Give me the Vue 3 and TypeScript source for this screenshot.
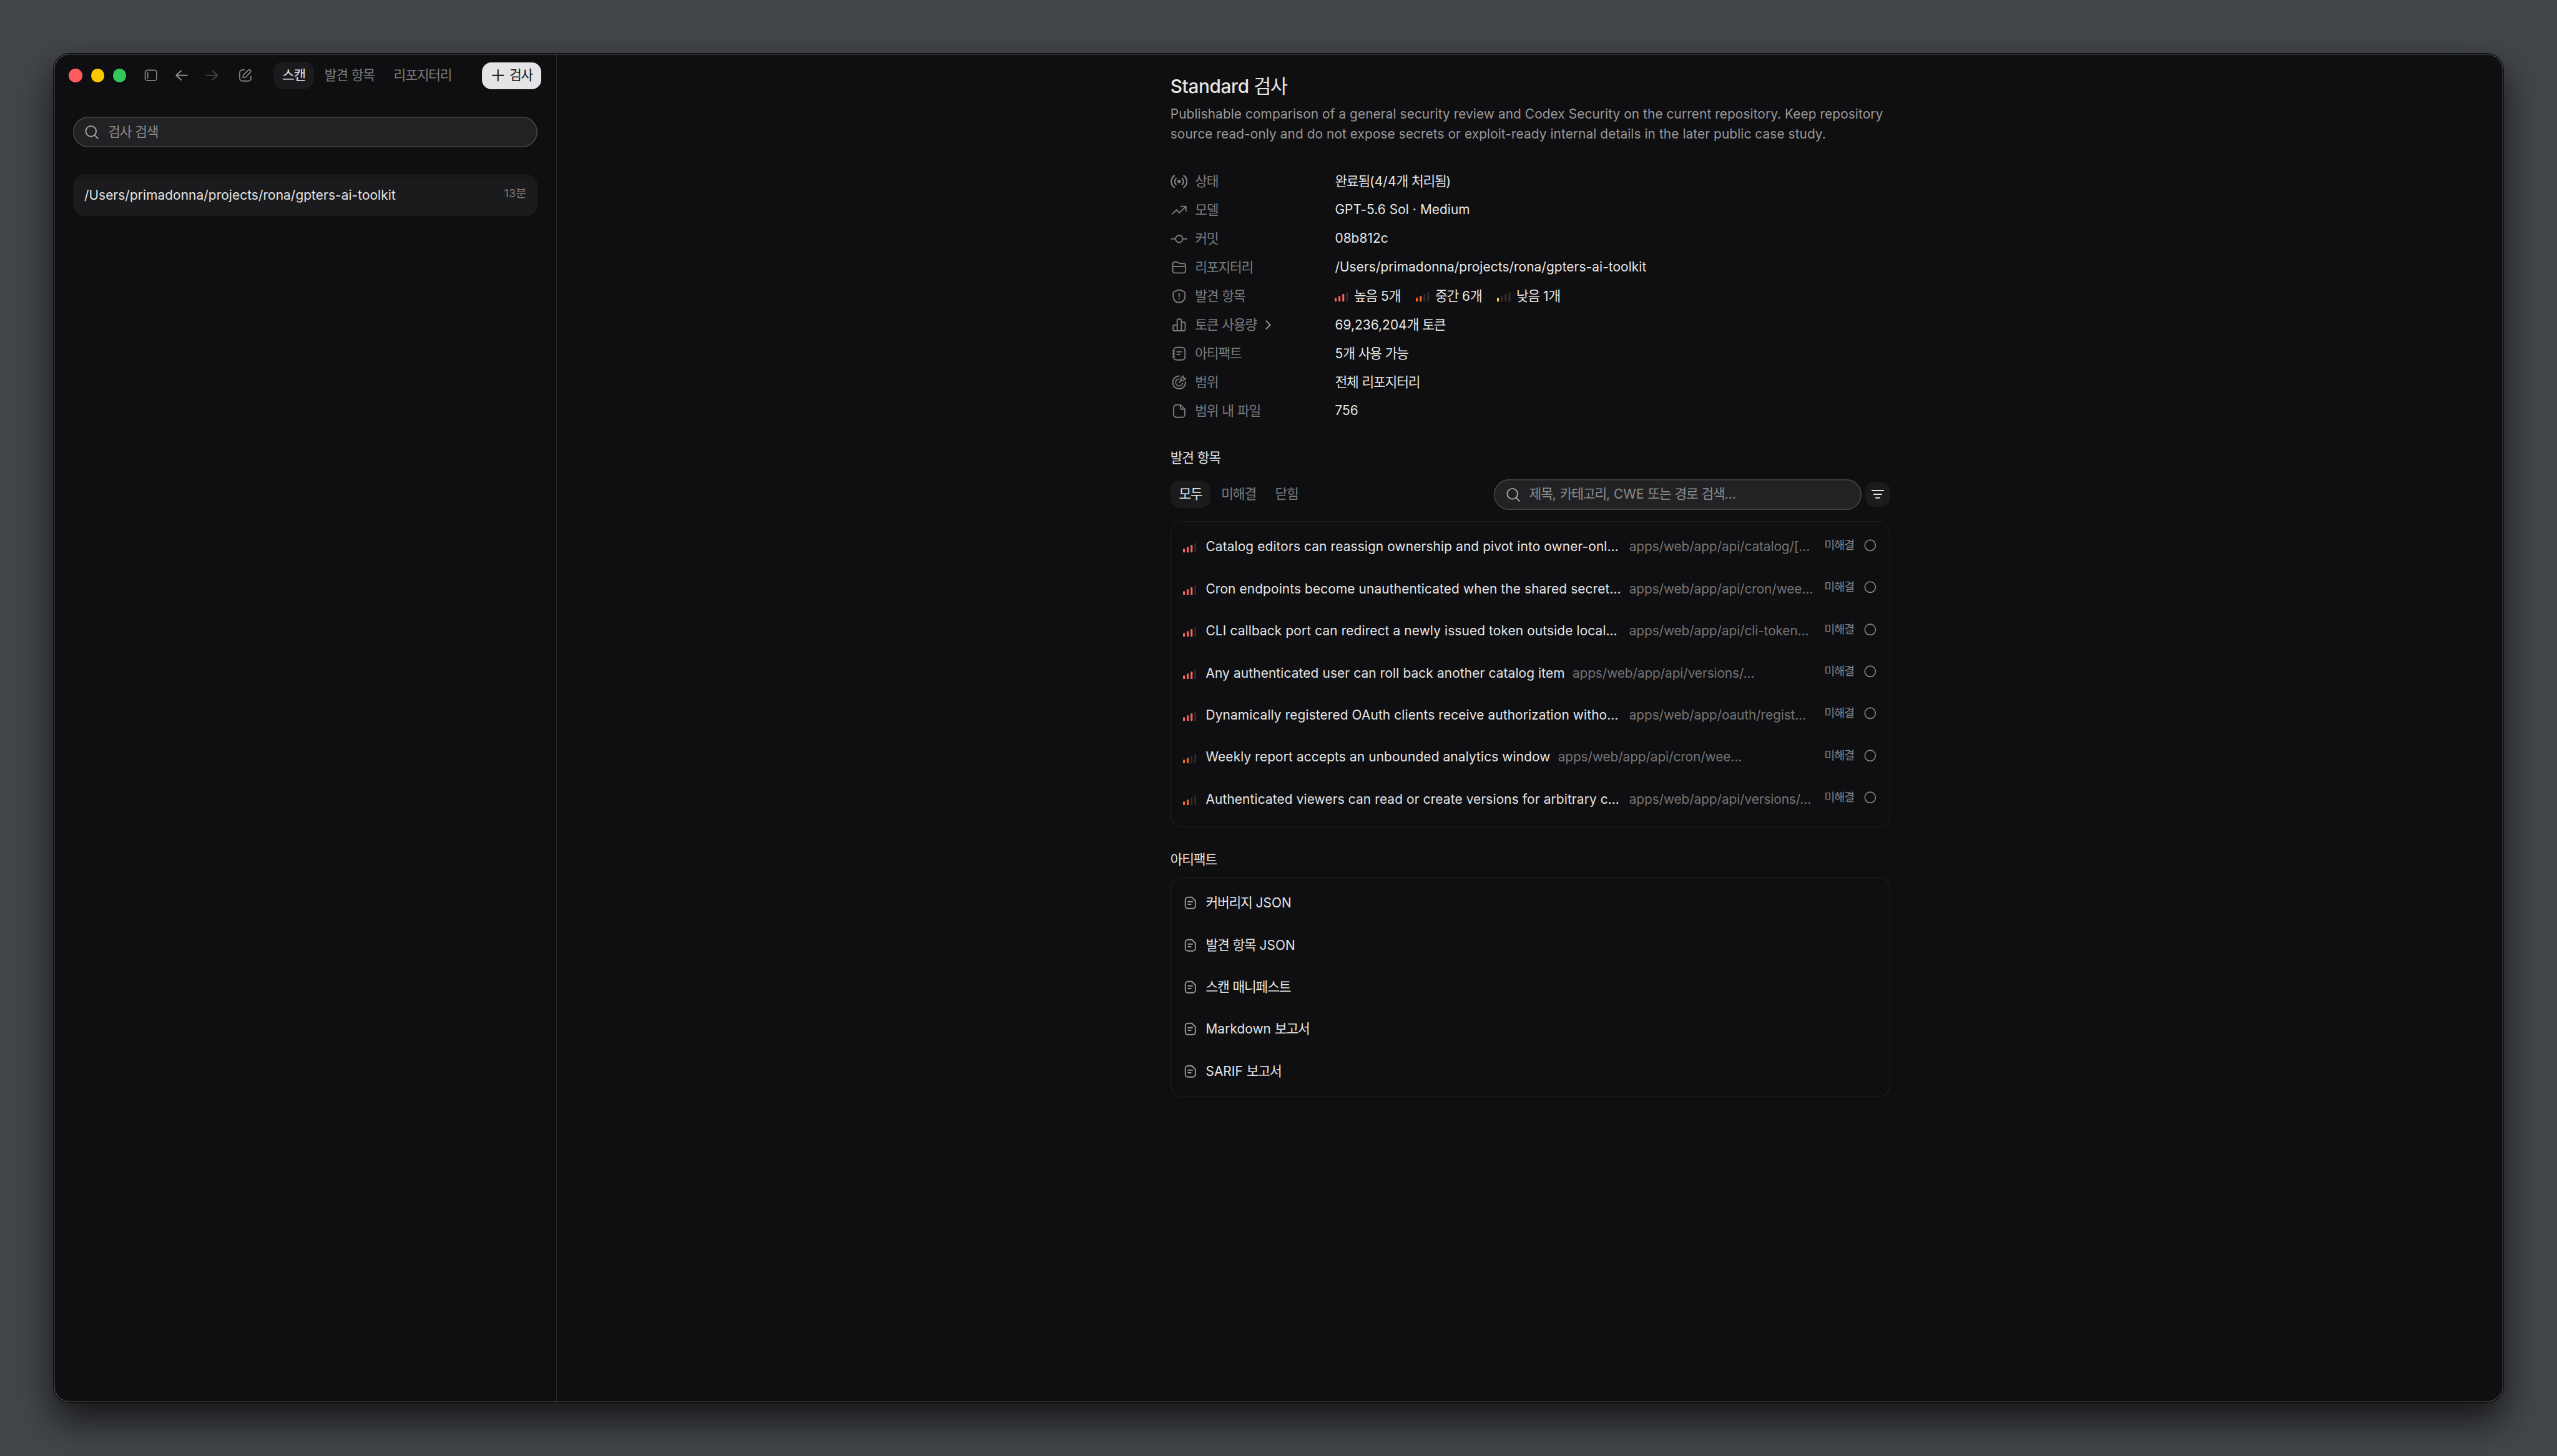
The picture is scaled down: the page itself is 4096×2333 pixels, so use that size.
<script setup lang="ts">
import { h, type FunctionalComponent } from 'vue'

type Level = 'high' | 'medium' | 'low'

interface MetaRow {
  icon: string
  label: string
  value?: string
  expandable?: boolean
}

interface Finding {
  level: Level
  title: string
  path: string
  clipped: boolean
}

// Splits mixed text so that Hangul runs get their own size and tracking.
const Txt: FunctionalComponent<{ t: string }> = (props) =>
  h(
    'span',
    { class: 'txt' },
    props.t
      .split(/([가-힣]+)/)
      .filter(Boolean)
      .map((run) => (/[가-힣]/.test(run) ? h('span', { class: 'ko' }, run) : run)),
  )
Txt.props = ['t']

const LIT: Record<Level, number> = { high: 3, medium: 2, low: 1 }

const Bars: FunctionalComponent<{ level: Level }> = (props) =>
  h(
    'svg',
    { class: ['bars', props.level], viewBox: '0 0 28 20' },
    [8, 12, 16, 20].map((height, i) =>
      h('rect', {
        x: i * 8,
        y: 20 - height,
        width: 4,
        height,
        rx: 1.4,
        class: i < LIT[props.level] ? 'on' : 'off',
      }),
    ),
  )
Bars.props = ['level']

const icons: Record<string, string> = {
  panel:
    'M11 7.2h14a5 5 0 0 1 5 5v11.6a5 5 0 0 1-5 5H11a5 5 0 0 1-5-5V12.2a5 5 0 0 1 5-5z M11.3 12.5v11',
  back: 'M17 8.5L6.8 18L17 27.5 M6.8 18H29.7',
  forward: 'M19 8.5L29.2 18L19 27.5 M29.2 18H6.3',
  compose:
    'M15.8 6.5H12A5.5 5.5 0 0 0 6.5 12v12.3a5.5 5.5 0 0 0 5.5 5.5h12.5a5.5 5.5 0 0 0 5.5-5.5V20.4 M13.2 22.6c.2-2.6.4-5 1.8-6.6l9.4-8.8a3 3 0 0 1 4.3 4.2l-8.9 9.6c-1.4 1.3-4 1.5-6.6 1.6z',
  plus: 'M18 6.6V29.4 M6.6 18H29.4',
  search: 'M27.5 16a10.9 10.9 0 1 1-21.8 0a10.9 10.9 0 0 1 21.8 0z M24.5 24.2L31 31.2',
  trend: 'M4 26L12.7 17.3L18.7 23.5L32 10.3 M22 10H32.4V19.8',
  commit: 'M25.5 18a7.5 7.5 0 1 1-15 0a7.5 7.5 0 0 1 15 0z M1.6 18H10.5 M25.5 18H34.4',
  folder:
    'M4.7 24.7V10.3a4 4 0 0 1 4-4h4.3c1 0 1.9.3 2.7.9l2 1.4c.7.5 1.5.8 2.4.8h7.2a4 4 0 0 1 4 4v11.3a4.5 4.5 0 0 1-4.5 4.5H9.2a4.5 4.5 0 0 1-4.5-4.5z M4.7 15.7H31.3',
  shield:
    'M16.6 4.8a4 4 0 0 1 2.8 0l8.4 3.2a4 4 0 0 1 2.6 3.7V18c0 7-5 12.9-12.4 12.9S5.6 25 5.6 18v-6.3A4 4 0 0 1 8.2 8z M18 12.4V19.2 M18 23.9V24.1',
  chart:
    'M14 30V8.5a3 3 0 0 1 3-3h2.7a3 3 0 0 1 3 3V30 M14 18H8.5a3 3 0 0 0-3 3v6a3 3 0 0 0 3 3h19.2a3 3 0 0 0 3-3V15a3 3 0 0 0-3-3h-5',
  notebook:
    'M12.5 5h11.8a6 6 0 0 1 6 6v14a6 6 0 0 1-6 6H12.5a6 6 0 0 1-6-6V11a6 6 0 0 1 6-6z M4.9 12H8.4 M4.9 18H8.4 M4.9 24.2H8.4 M13.7 14H22.5 M13.7 19.5H19.6',
  target:
    'M18 4.6A13.4 13.4 0 1 0 31.4 17.4 M17.4 10.7A7.3 7.3 0 1 0 25.2 19.6 M18 18L23 12.9 M21.7 14V9L26.4 4.4L27 9L31.6 9.7L27 14z',
  file: 'M12.4 5h8.8L30 13.8V25a6 6 0 0 1-6 6H12.4a6 6 0 0 1-6-6V11a6 6 0 0 1 6-6z M20.9 5.4v5.1a3.6 3.6 0 0 0 3.6 3.6h5.1',
  report:
    'M13 6.2h8.2L28.5 13.5V24.6a5.2 5.2 0 0 1-5.2 5.2H12.7a5.2 5.2 0 0 1-5.2-5.2V11.7A5.5 5.5 0 0 1 13 6.2z M13.3 15.3H22.3 M13.3 20.8H19.2',
}

const tools = ['panel', 'back', 'forward', 'compose']
const tabs = ['스캔', '발견 항목', '리포지터리']
const filters = ['모두', '미해결', '닫힘']

const meta: MetaRow[] = [
  { icon: 'signal', label: '상태', value: '완료됨(4/4개 처리됨)' },
  { icon: 'trend', label: '모델', value: 'GPT-5.6 Sol · Medium' },
  { icon: 'commit', label: '커밋', value: '08b812c' },
  { icon: 'folder', label: '리포지터리', value: '/Users/primadonna/projects/rona/gpters-ai-toolkit' },
  { icon: 'shield', label: '발견 항목' },
  { icon: 'chart', label: '토큰 사용량', value: '69,236,204개 토큰', expandable: true },
  { icon: 'notebook', label: '아티팩트', value: '5개 사용 가능' },
  { icon: 'target', label: '범위', value: '전체 리포지터리' },
  { icon: 'file', label: '범위 내 파일', value: '756' },
]

const severities: { level: Level; text: string }[] = [
  { level: 'high', text: '높음 5개' },
  { level: 'medium', text: '중간 6개' },
  { level: 'low', text: '낮음 1개' },
]

const findings: Finding[] = [
  { level: 'high', title: 'Catalog editors can reassign ownership and pivot into owner-onl…', path: 'apps/web/app/api/catalog/[…', clipped: true },
  { level: 'high', title: 'Cron endpoints become unauthenticated when the shared secret…', path: 'apps/web/app/api/cron/wee…', clipped: true },
  { level: 'high', title: 'CLI callback port can redirect a newly issued token outside local…', path: 'apps/web/app/api/cli-token…', clipped: true },
  { level: 'high', title: 'Any authenticated user can roll back another catalog item', path: 'apps/web/app/api/versions/…', clipped: false },
  { level: 'high', title: 'Dynamically registered OAuth clients receive authorization witho…', path: 'apps/web/app/oauth/regist…', clipped: true },
  { level: 'medium', title: 'Weekly report accepts an unbounded analytics window', path: 'apps/web/app/api/cron/wee…', clipped: false },
  { level: 'medium', title: 'Authenticated viewers can read or create versions for arbitrary c…', path: 'apps/web/app/api/versions/…', clipped: true },
]

const artifacts = ['커버리지 JSON', '발견 항목 JSON', '스캔 매니페스트', 'Markdown 보고서', 'SARIF 보고서']
</script>

<template>
  <div class="desktop">
    <div class="window">
      <aside class="sidebar">
        <header class="titlebar">
          <div class="lights"><i class="red" /><i class="yellow" /><i class="green" /></div>
          <div class="tools">
            <svg v-for="name in tools" :key="name" class="icon" :class="name" viewBox="0 0 36 36">
              <path :d="icons[name]" />
            </svg>
          </div>
          <nav class="tabs">
            <span v-for="(tab, i) in tabs" :key="tab" class="tab" :class="{ active: i === 0 }"><Txt :t="tab" /></span>
          </nav>
          <button class="new-scan">
            <svg class="icon" viewBox="0 0 36 36"><path :d="icons.plus" /></svg>
            <Txt t="검사" />
          </button>
        </header>
        <div class="search">
          <svg class="icon" viewBox="0 0 36 36"><path :d="icons.search" /></svg>
          <Txt t="검사 검색" />
        </div>
        <div class="scan">
          <Txt class="scan-path" t="/Users/primadonna/projects/rona/gpters-ai-toolkit" />
          <Txt class="scan-time" t="13분" />
        </div>
      </aside>

      <main class="main">
        <div class="content">
          <h1><Txt t="Standard 검사" /></h1>
          <p class="summary">
            Publishable comparison of a general security review and Codex Security on the current repository. Keep repository<br />
            source read-only and do not expose secrets or exploit-ready internal details in the later public case study.
          </p>

          <dl class="meta">
            <div v-for="row in meta" :key="row.icon" class="meta-row">
              <dt>
                <svg v-if="row.icon === 'signal'" class="icon signal" viewBox="0 0 36 36">
                  <path d="M8 5.8A15 15 0 0 0 8 30.2 M28 5.8A15 15 0 0 1 28 30.2 M11.4 11.7A9.2 9.2 0 0 0 11.4 24.3 M24.6 11.7A9.2 9.2 0 0 1 24.6 24.3" />
                  <circle cx="18" cy="18" r="3.6" />
                </svg>
                <svg v-else class="icon" viewBox="0 0 36 36"><path :d="icons[row.icon]" /></svg>
                <Txt :t="row.label" />
                <svg v-if="row.expandable" class="chevron" viewBox="0 0 12 20"><path d="M1.8 1.8L10 10L1.8 18.2" /></svg>
              </dt>
              <dd v-if="row.value"><Txt :t="row.value" /></dd>
              <dd v-else class="severities">
                <span v-for="s in severities" :key="s.level" class="severity"><Bars :level="s.level" /><Txt :t="s.text" /></span>
              </dd>
            </div>
          </dl>

          <h2><Txt t="발견 항목" /></h2>
          <div class="filterbar">
            <nav class="tabs">
              <span v-for="(f, i) in filters" :key="f" class="tab" :class="{ active: i === 0 }"><Txt :t="f" /></span>
            </nav>
            <div class="search">
              <svg class="icon" viewBox="0 0 36 36"><path :d="icons.search" /></svg>
              <Txt t="제목, 카테고리, CWE 또는 경로 검색…" />
            </div>
            <button class="filter">
              <svg viewBox="0 0 26 18"><path d="M0 1.3H26 M4 9H22 M8 16.7H18" /></svg>
            </button>
          </div>

          <section class="card findings">
            <div v-for="f in findings" :key="f.title" class="row">
              <Bars :level="f.level" />
              <span class="title" :class="{ clipped: f.clipped }">{{ f.title }}</span>
              <span class="path">{{ f.path }}</span>
              <span class="status">
                <Txt t="미해결" />
                <svg class="icon" viewBox="0 0 36 36"><circle cx="18" cy="18" r="11.2" /></svg>
              </span>
            </div>
          </section>

          <h2><Txt t="아티팩트" /></h2>
          <section class="card artifacts">
            <div v-for="a in artifacts" :key="a" class="row">
              <svg class="icon" viewBox="0 0 36 36"><path :d="icons.report" /></svg>
              <Txt :t="a" />
            </div>
          </section>
        </div>
      </main>
    </div>
  </div>
</template>

<style>
html {
  font-size: calc(100vw / 267.2);
}
body {
  margin: 0;
  background: #424549;
}
.txt {
  white-space: pre;
}
.ko {
  font-size: 1.03em;
  font-weight: 400;
  letter-spacing: -0.056em;
}
.bars {
  display: block;
  flex: none;
  width: 1.4rem;
  height: 1rem;
}
.bars .off {
  fill: #2e2e30;
}
.bars.high .on {
  fill: #ff6360;
}
.bars.medium .on {
  fill: #fb6a22;
}
.bars.low .on {
  fill: #ffd240;
}
</style>

<style scoped>
.desktop {
  box-sizing: border-box;
  width: 100vw;
  height: 100vh;
  padding: 5.6rem;
  overflow: hidden;
  background: #424549;
  color: #e5e5e6;
  font-family: Inter, 'Noto Sans CJK KR', sans-serif;
  font-size: 1.36rem;
  line-height: 2rem;
  letter-spacing: 0.004em;
}
.window {
  position: relative;
  display: flex;
  box-sizing: border-box;
  height: 100%;
  overflow: hidden;
  border-radius: 1.7rem;
  background: #0f0f11;
  box-shadow:
    0 0 0 0.06rem #000,
    0 1.8rem 3.8rem rgba(0, 0, 0, 0.7);
}
/* light rim drawn over the panes */
.window::after {
  content: '';
  position: absolute;
  inset: 0;
  border-radius: inherit;
  box-shadow: inset 0 0 0 0.1rem #454547;
  pointer-events: none;
}
.icon {
  display: block;
  flex: none;
  width: 1.8rem;
  height: 1.8rem;
  fill: none;
  stroke: currentColor;
  stroke-width: 2.5;
  stroke-linecap: round;
  stroke-linejoin: round;
}
button {
  border: 0;
  padding: 0;
  font: inherit;
  letter-spacing: inherit;
}

.sidebar {
  flex: none;
  box-sizing: border-box;
  width: 52.6rem;
  padding: 0 2rem;
  border-right: 0.1rem solid #2a2a2c;
}
.titlebar {
  display: flex;
  align-items: center;
  height: 4.6rem;
  margin: 0 -0.4rem;
}
.lights {
  display: flex;
  gap: 0.9rem;
}
.lights i {
  width: 1.4rem;
  height: 1.4rem;
  border-radius: 50%;
}
.red {
  background: #ff5c60;
}
.yellow {
  background: #fcc800;
}
.green {
  background: #34c759;
}
.tools {
  display: flex;
  gap: 1.4rem;
  margin-left: 1.7rem;
  color: #7b7b7d;
}
.tools .back {
  color: #8f8f91;
}
.tools .forward {
  color: #444446;
}
.tools .compose {
  margin-left: 0.2rem;
}
.tabs {
  display: flex;
  gap: 0.2rem;
}
.titlebar .tabs {
  margin-left: 2.1rem;
}
.tab {
  padding: 0 0.9rem;
  border-radius: 1rem;
  line-height: 2.8rem;
  color: #7b7b7d;
}
.tab.active {
  background: #1b1b1d;
  color: #e5e5e6;
}
.new-scan {
  display: flex;
  align-items: center;
  box-sizing: border-box;
  width: 6.2rem;
  height: 2.8rem;
  margin-left: auto;
  padding-left: 0.8rem;
  gap: 0.3rem;
  border-radius: 1rem;
  background: #e3e4e6;
  color: #111113;
}
.search {
  display: flex;
  align-items: center;
  box-sizing: border-box;
  height: 3.2rem;
  padding-left: 1.1rem;
  gap: 0.8rem;
  border-radius: 1.6rem;
  background: #222224;
  box-shadow: inset 0 0 0 0.1rem #454547;
  color: #8b8b8d;
}
.search .icon {
  color: #a6a6a8;
}
.sidebar .search {
  margin-top: 2rem;
}
.scan {
  display: flex;
  justify-content: space-between;
  align-items: center;
  box-sizing: border-box;
  height: 4.4rem;
  margin-top: 2.8rem;
  padding: 0 1.2rem;
  border-radius: 1.2rem;
  background: linear-gradient(#171719, #1b1b1d 0.8rem);
}
.scan-path {
  padding-top: 0.1rem;
}
.scan-time {
  padding-bottom: 0.35rem;
  font-size: 1.17rem;
  color: #7b7b7d;
}

.main {
  flex: 1;
}
.content {
  width: 75.2rem;
  margin: 0 auto;
  padding-top: 2rem;
}
h1,
h2,
p,
dl,
dd {
  margin: 0;
  font-weight: 400;
}
h1 {
  font-size: 1.94rem;
  font-weight: 500;
  line-height: 2.8rem;
  letter-spacing: -0.012em;
}
.summary {
  margin-top: 0.5rem;
  line-height: 2.1rem;
  color: #98989a;
  white-space: nowrap;
}
.meta {
  margin-top: 2.35rem;
}
.meta-row {
  display: flex;
  align-items: center;
  height: 3rem;
}
dt {
  display: flex;
  align-items: center;
  flex: none;
  gap: 0.78rem;
  width: 17.2rem;
  color: #7b7b7d;
}
.icon.signal {
  stroke-width: 3.1;
}
.signal circle {
  fill: currentColor;
  stroke: none;
}
.chevron {
  width: 0.6rem;
  height: 1rem;
  margin-left: 0.15rem;
  fill: none;
  stroke: #9a9a9c;
  stroke-width: 2.5;
  stroke-linecap: round;
  stroke-linejoin: round;
}
.severities {
  display: flex;
  gap: 1.62rem;
}
.severity {
  display: flex;
  align-items: center;
  gap: 0.6rem;
}
.severity .bars {
  margin-top: 0.2rem;
}
h2 {
  margin-top: 2.375rem;
  font-size: 1.36rem;
  line-height: 2rem;
}
.filterbar {
  display: flex;
  align-items: center;
  margin-top: 1.2rem;
}
.filterbar .search {
  width: 38.4rem;
  margin-left: auto;
}
.filter {
  display: grid;
  place-items: center;
  width: 2.6rem;
  height: 2.6rem;
  margin-left: 0.4rem;
  border-radius: 1rem;
  background: #1b1b1d;
}
.filter svg {
  width: 1.3rem;
  height: 0.9rem;
  stroke: #e5e5e6;
  stroke-width: 2.6;
}
.card {
  box-sizing: border-box;
  padding: 0.5rem 0;
  border-radius: 1.2rem;
  box-shadow: inset 0 0 0 0.1rem #1b1b1d;
}
.findings {
  margin-top: 1.2rem;
  padding-bottom: 0.7rem;
}
.artifacts {
  margin-top: 0.77rem;
}
.row {
  display: flex;
  align-items: center;
  height: 4.4rem;
  padding: 0 1.2rem 0 1.3rem;
}
.row .bars {
  margin: 0.2rem 1rem 0 0;
}
.title,
.path {
  white-space: nowrap;
}
.title {
  letter-spacing: 0.0065em;
}
.clipped {
  width: 43.45rem;
}
.path {
  margin-left: 0.8rem;
  letter-spacing: -0.005em;
  color: #747476;
}
.status {
  display: flex;
  align-items: center;
  gap: 0.75rem;
  margin-left: auto;
  padding-bottom: 0.4rem;
  font-size: 1.17rem;
  color: #838385;
}
.status .icon {
  stroke-width: 2.2;
}
.artifacts .row {
  padding-left: 1.2rem;
  gap: 0.7rem;
}
.artifacts .icon {
  color: #98989a;
}
</style>
